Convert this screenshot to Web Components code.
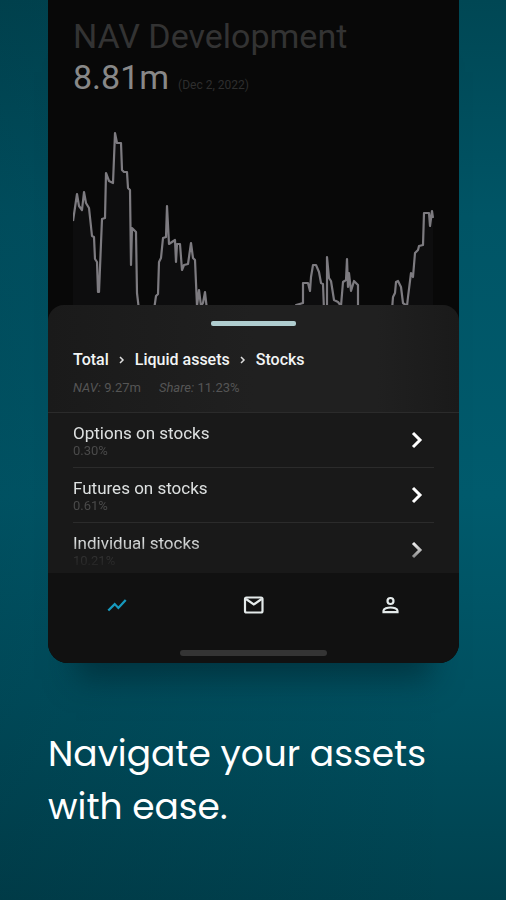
<!DOCTYPE html>
<html lang="en">
<head>
<meta charset="utf-8">
<meta name="viewport" content="width=device-width, initial-scale=1">
<title>Navigate your assets</title>
<style>
    body {
        margin: 0;
        min-height: 100vh;
        font-family: Roboto, "Liberation Sans", sans-serif;
        background: linear-gradient(90deg, rgba(0, 20, 28, 0.14), rgba(0, 20, 28, 0) 90%),
            linear-gradient(#004754 0%, #005566 24%, #005b6d 55%, #005060 78%, #00414e 100%);
    }
</style>
</head>
<body>
<promo-page>
    <phone-frame slot="phone">
        <nav-chart heading="NAV Development" value="8.81m" date="(Dec 2, 2022)"></nav-chart>
        <asset-sheet>
            <bread-crumb slot="head" path="Total,Liquid assets,Stocks" nav="9.27m" share="11.23%"></bread-crumb>
            <asset-row share="0.30%">Options on stocks</asset-row>
            <asset-row share="0.61%">Futures on stocks</asset-row>
            <asset-row share="10.21%">Individual stocks</asset-row>
        </asset-sheet>
        <tab-bar></tab-bar>
    </phone-frame>
    Navigate your assets with ease.
</promo-page>

<script>
class PromoPage extends HTMLElement {

    constructor() {
        super();
        this.attachShadow({mode: "open"}).innerHTML = `
            <style>
                :host {
                    display: flex;
                    flex-direction: column;
                    gap: 64px;
                    padding: 0 47px 48px 48px;
                }
                h1 {
                    margin: 0;
                    color: #fff;
                    font-family: Poppins, Inter, sans-serif;
                    font-size: 36px;
                    font-weight: 400;
                    line-height: 53px;
                }
            </style>
            <slot name="phone"></slot>
            <h1><slot></slot></h1>`;
    }
}

class PhoneFrame extends HTMLElement {

    constructor() {
        super();
        this.attachShadow({mode: "open"}).innerHTML = `
            <style>
                :host {
                    display: block;
                    overflow: hidden;
                    background: #080808;
                    border-radius: 0 0 20px 20px;
                    box-shadow: 0 44px 28px -28px rgba(0, 30, 38, 0.5);
                }
            </style>
            <slot></slot>`;
    }
}

class NavChart extends HTMLElement {

    constructor() {
        super();
        this.attachShadow({mode: "open"});
    }

    connectedCallback() {
        const line = `M73 221L77 194L79 206L82 210L84 192L86 203L89 208L92 236L94 237L95 259L97 262L98 292L99 292
            L102 219L105 218L106 173L109 181L113 183L115 133L117 143L121 143L122 170L124 172L127 172L128 188L130 190
            L131 265L132 228L136 232L137 293L139 310L154 310L156 296L158 294L159 262L161 258L163 238L166 237L167 206
            L169 244L175 240L176 262L177 244L180 244L182 270L184 265L188 264L191 243L193 258L195 260L197 306L199 290
            L201 306L203 303L205 292L207 310L296 310L296 305L303 303L303 283L308 283L310 291L311 277L313 265L316 265
            L319 272L321 283L323 284L324 310L327 310L327 257L329 278L331 281L334 300L338 302L341 306L343 282L346 280
            L347 259L348 287L349 273L351 291L354 281L358 285L358 310L392 310L393 297L395 293L396 282L398 281L401 287
            L403 303L407 306L408 297L411 273L413 277L415 253L418 250L419 246L423 245L424 213L429 213L430 226L432 211L433 218`;
        this.shadowRoot.innerHTML = `
            <style>
                :host {
                    display: block;
                    padding: 16px 25px 0;
                }
                h2 {
                    margin: 0;
                    color: #333;
                    font-size: 34px;
                    font-weight: 400;
                    line-height: 40px;
                }
                p {
                    display: flex;
                    align-items: baseline;
                    gap: 9px;
                    margin: 0 0 24px;
                    color: #2e2e2e;
                    font-size: 12px;
                    line-height: 42px;
                }
                strong {
                    color: #888;
                    font-size: 34px;
                    font-weight: 400;
                }
                svg {
                    display: block;
                    width: 100%;
                }
            </style>
            <h2>${this.getAttribute("heading")}</h2>
            <p><strong>${this.getAttribute("value")}</strong>${this.getAttribute("date")}</p>
            <svg viewBox="73 130 361 175" role="img" aria-label="NAV over time">
                <path d="${line}V310H73Z" fill="#0d0d0e"/>
                <path d="${line}" fill="none" stroke="#7d7b80" stroke-width="2.200" stroke-linejoin="round"/>
            </svg>`;
    }
}

class AssetSheet extends HTMLElement {

    constructor() {
        super();
        this.attachShadow({mode: "open"}).innerHTML = `
            <style>
                :host {
                    display: block;
                    border-radius: 16px 16px 0 0;
                    background: linear-gradient(90deg, #1a1a1a, #202020 50%, #202020 80%, #1a1a1a);
                }
                header {
                    display: flex;
                    flex-direction: column;
                    gap: 22px;
                    padding: 16px 25px;
                    border-bottom: 1px solid #2b2b2b;
                }
                .handle {
                    align-self: center;
                    width: 85px;
                    height: 5px;
                    border-radius: 2px;
                    background: #afcdcf;
                }
                .body {
                    background: #191919;
                }
                .list {
                    height: 160px;
                    overflow: hidden;
                    padding: 0 25px;
                    mask-image: linear-gradient(#000 128px, transparent 160px);
                }
            </style>
            <header>
                <div class="handle"></div>
                <slot name="head"></slot>
            </header>
            <div class="body">
                <div class="list"><slot></slot></div>
            </div>`;
    }
}

class BreadCrumb extends HTMLElement {

    constructor() {
        super();
        this.attachShadow({mode: "open"});
    }

    connectedCallback() {
        const arrow = `<svg width="6" height="8" viewBox="0 0 6 8"><path d="M1 1l3 3-3 3" fill="none" stroke="#ddd" stroke-width="1.5"/></svg>`;
        const links = this.getAttribute("path").split(",").map(name => `<a href="#">${name}</a>`);
        this.shadowRoot.innerHTML = `
            <style>
                :host {
                    display: block;
                }
                nav {
                    display: flex;
                    align-items: center;
                    gap: 10px;
                    font-size: 16px;
                    font-weight: 500;
                    line-height: 24px;
                }
                a {
                    color: #f2f4f4;
                    text-decoration: none;
                }
                p {
                    display: flex;
                    gap: 18px;
                    margin: 8px 0 0;
                    color: #555;
                    font-size: 13px;
                    line-height: 16px;
                }
            </style>
            <nav aria-label="Breadcrumb">${links.join(arrow)}</nav>
            <p>
                <span><em>NAV:</em> ${this.getAttribute("nav")}</span>
                <span><em>Share:</em> ${this.getAttribute("share")}</span>
            </p>`;
    }
}

class AssetRow extends HTMLElement {

    constructor() {
        super();
        this.attachShadow({mode: "open"});
    }

    connectedCallback() {
        this.shadowRoot.innerHTML = `
            <style>
                :host {
                    display: block;
                    border-bottom: 1px solid #2b2b2b;
                }
                a {
                    display: flex;
                    align-items: center;
                    justify-content: space-between;
                    height: 54px;
                    padding-right: 11px;
                    color: #dde0e0;
                    font-size: 17px;
                    line-height: 20px;
                    text-decoration: none;
                }
                span {
                    padding-top: 2px;
                }
                small {
                    display: block;
                    color: #4a4a4a;
                    font-size: 13px;
                    line-height: 16px;
                }
            </style>
            <a href="#">
                <span><slot></slot><small>${this.getAttribute("share")}</small></span>
                <svg width="12" height="18" viewBox="0 0 12 18"><path d="M2 2l7 7-7 7" fill="none" stroke="#fff" stroke-width="3"/></svg>
            </a>`;
    }
}

class TabBar extends HTMLElement {

    constructor() {
        super();
        this.attachShadow({mode: "open"}).innerHTML = `
            <style>
                :host {
                    display: block;
                    padding: 16px 0 7px;
                    background: #111;
                }
                nav {
                    display: grid;
                    grid-template-columns: repeat(3, 1fr);
                    margin-bottom: 29px;
                }
                button {
                    display: grid;
                    place-items: center;
                    height: 32px;
                    padding: 0;
                    border: 0;
                    background: none;
                    color: #e4eaea;
                }
                button.active {
                    color: #1799bd;
                }
                .home {
                    width: 147px;
                    height: 6px;
                    margin: 0 auto;
                    border-radius: 3px;
                    background: #343434;
                }
            </style>
            <nav>
                <button class="active" aria-label="Performance">
                    <svg width="22" height="22" viewBox="0 0 24 24" fill="none" stroke="currentColor" stroke-width="2.500"><path d="M2.500 18l7-7 4 4.200L21.500 6.500"/></svg>
                </button>
                <button aria-label="Messages">
                    <svg width="24" height="24" viewBox="0 0 24 24" fill="none" stroke="currentColor" stroke-width="2.200"><rect x="3" y="4.500" width="17.500" height="15" rx="1.500"/><path d="M4 6l7.800 5.500L19.600 6"/></svg>
                </button>
                <button aria-label="Profile">
                    <svg width="24" height="24" viewBox="0 0 24 24" fill="none" stroke="currentColor" stroke-width="2.200"><circle cx="11.500" cy="8" r="3"/><path d="M4.500 19.200v-1.500C4.500 15.700 8.500 14.500 11.500 14.500s7 1.200 7 3.200v1.500z"/></svg>
                </button>
            </nav>
            <div class="home"></div>`;
    }
}

customElements.define("promo-page", PromoPage);
customElements.define("phone-frame", PhoneFrame);
customElements.define("nav-chart", NavChart);
customElements.define("asset-sheet", AssetSheet);
customElements.define("bread-crumb", BreadCrumb);
customElements.define("asset-row", AssetRow);
customElements.define("tab-bar", TabBar);
</script>
</body>
</html>
